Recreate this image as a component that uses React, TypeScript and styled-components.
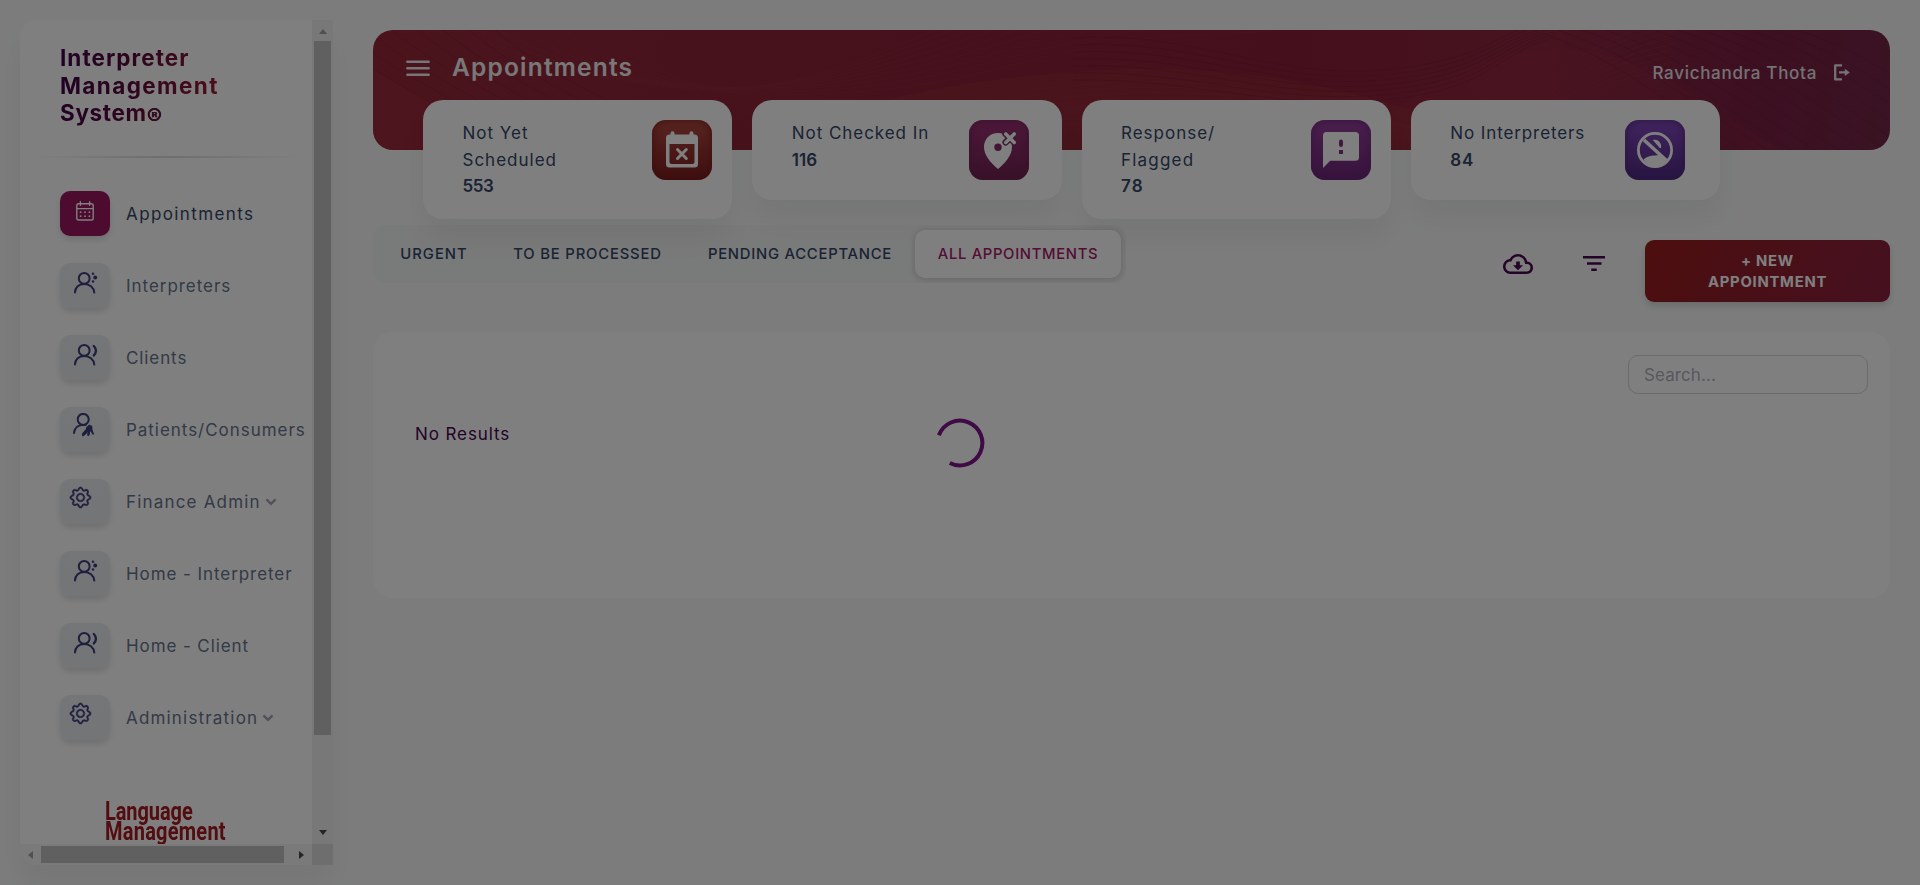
import React from "react";
import styled, { createGlobalStyle } from "styled-components";
import { BsGear } from "react-icons/bs";
import { MdOutlineCloudDownload } from "react-icons/md";

const GlobalStyle = createGlobalStyle`
  *, *::before, *::after { box-sizing: border-box; }
  body {
    margin: 0;
    background: #f8f9fa;
    color: #344767;
    font-family: Inter, "Open Sans", sans-serif;
    font-size: 17px;
    overflow: hidden;
  }
  svg { display: block; }
`;

const Page = styled.div`
  display: flex;
  gap: 40px;
  height: 885px;
  padding: 20px 30px 20px 20px;
`;

/* Text with its own tracking */
const Track = styled.span<{ $ls: number }>`
  letter-spacing: ${(p) => p.$ls}px;
  white-space: nowrap;
`;

/* ---------- Sidebar ---------- */
const Sidebar = styled.aside`
  flex: none;
  display: grid;
  grid-template: 824px 21px / 292px 21px;
  width: 313px;
  height: 845px;
  border-radius: 16px 0 0 16px;
  box-shadow: 0 20px 27px rgba(0, 0, 0, 0.05);
  overflow: hidden;
`;

const SidebarBody = styled.div`
  display: flex;
  flex-direction: column;
  overflow: hidden;
  padding-top: 24px;
  background: #fff;
`;

const Brand = styled.h1`
  display: flex;
  flex-direction: column;
  align-self: flex-start;
  margin: 0 0 29px 40px;
  font-size: 22.5px;
  line-height: 27.5px;
  font-weight: 700;
  color: transparent;
  background: linear-gradient(100deg, #430448 5%, #5a0a3c 45%, #a01c34 100%);
  background-clip: text;
  -webkit-background-clip: text;
`;

const Registered = styled.span`
  font-size: 23px;
  line-height: 20px;
  vertical-align: -4px;
  color: #64123c;
`;

const Divider = styled.hr`
  flex: none;
  width: 100%;
  height: 2px;
  margin: 0 0 33px;
  border: 0;
  background: linear-gradient(90deg, #fff 3%, #dcdcdc 50%, #fff 97%);
`;

const BrandLine = styled(Track)`
  height: 27.5px;
`;

const Nav = styled.nav`
  display: flex;
  flex-direction: column;
  gap: 27px;
  padding-left: 40px;
`;

const NavItem = styled.a<{ $active?: boolean }>`
  display: flex;
  align-items: center;
  gap: 16px;
  height: 45px;
  color: ${(p) => (p.$active ? "#344767" : "#67748e")};
`;

const NavIcon = styled.span<{ $active?: boolean; $x: number; $y: number }>`
  flex: none;
  width: 50px;
  height: 45px;
  padding: ${(p) => p.$y}px 0 0 ${(p) => p.$x}px;
  border-radius: 10px;
  color: ${(p) => (p.$active ? "#fff" : "#3c3c7c")};
  background: ${(p) => (p.$active ? "#9a1760" : "linear-gradient(180deg, #e9ecf0, #e8eaec)")};
  box-shadow: 0 4px 6px rgba(0, 0, 0, 0.12);
`;

const NavLabel = styled.span`
  display: flex;
  align-items: center;
  gap: 4px;
  padding-top: 2px;
`;

const GearIcon = styled(BsGear)`
  width: 21px;
  height: 21px;
  stroke: currentColor;
  stroke-width: 0.45px;
  overflow: visible;
`;

const Logo = styled.div`
  display: flex;
  flex-direction: column;
  align-items: flex-start;
  margin: 62px 0 0 85px;
  color: #a51a22;
  font: 700 25px/20.5px Roboto, sans-serif;
  transform: scaleX(0.8);
  transform-origin: left top;
`;

const VerticalBar = styled.div`
  display: flex;
  flex-direction: column;
  align-items: center;
  background: #f1f1f1;
  &::before {
    content: "";
    margin: 9px 0 7px;
    border: solid transparent;
    border-width: 0 4.5px 5px;
    border-bottom-color: #a0a0a0;
  }
  &::after {
    content: "";
    margin: auto 0 9px;
    border: solid transparent;
    border-width: 5px 4.5px 0;
    border-top-color: #484848;
  }
`;

const VerticalThumb = styled.div`
  width: 17px;
  height: 694px;
  background: #c1c1c1;
`;

const HorizontalBar = styled.div`
  display: flex;
  align-items: center;
  background: #f4f4f4;
  &::before {
    content: "";
    margin: 0 8px;
    border: solid transparent;
    border-width: 4.5px 5px 4.5px 0;
    border-right-color: #a0a0a0;
  }
  &::after {
    content: "";
    margin: 0 8px 0 auto;
    border: solid transparent;
    border-width: 4.5px 0 4.5px 5px;
    border-left-color: #484848;
  }
`;

const HorizontalThumb = styled.div`
  width: 243px;
  height: 17px;
  background: #c1c1c1;
`;

const ScrollCorner = styled.div`
  background: #dcdcdc;
`;

/* ---------- Main column ---------- */
const Main = styled.main`
  flex: 1;
  min-width: 0;
  display: flex;
  flex-direction: column;
  padding-top: 10px;
`;

const Header = styled.header`
  flex: none;
  position: relative;
  height: 120px;
  border-radius: 20px;
  overflow: hidden;
  background: linear-gradient(100deg, #97293b 0%, #8f2539 20%, #8b2038 60%, #8e273f 76%, #7a1f42 90%, #742748 100%);
`;

const Waves = styled.svg`
  position: absolute;
  inset: 0;
`;

const HeaderContent = styled.div`
  position: relative;
  display: flex;
  align-items: center;
  height: 76px;
  padding: 0 40px 0 33px;
  color: #fff;
`;

const PageTitle = styled.h2`
  margin: 0 0 2px 22px;
  font-size: 24.5px;
  font-weight: 600;
  line-height: 30px;
  color: #f0f0f2;
`;

const User = styled.div`
  display: flex;
  align-items: center;
  gap: 16px;
  margin: 9px 0 0 auto;
  font-size: 17px;
  font-weight: 500;
  color: #e9e4e8;
`;

const Stats = styled.section`
  flex: none;
  position: relative;
  display: grid;
  grid-template-columns: repeat(4, 309.25px);
  align-items: start;
  gap: 20px;
  height: 119px;
  margin: -50px 0 6px 50px;
`;

const StatCard = styled.article<{ $right: number }>`
  display: flex;
  justify-content: space-between;
  padding: 20px ${(p) => p.$right}px 19.5px 39.5px;
  border-radius: 20px;
  background: #fff;
  box-shadow: 0 20px 27px rgba(0, 0, 0, 0.05);
`;

const StatText = styled.div`
  display: flex;
  flex-direction: column;
  line-height: 26.5px;
`;

const StatValue = styled(Track)`
  font-weight: 600;
`;

const StatIcon = styled.div<{ $from: string; $to: string }>`
  display: grid;
  place-items: center;
  width: 60px;
  height: 60px;
  border-radius: 14px;
  background: ${(p) => `linear-gradient(180deg, ${p.$from}, ${p.$to})`};
  box-shadow: inset 0 0 8px ${(p) => p.$to};
`;

const Toolbar = styled.div`
  flex: none;
  display: flex;
  justify-content: space-between;
  align-items: flex-start;
  height: 107px;
`;

const Tabs = styled.div`
  position: relative;
  display: flex;
  height: 58px;
  padding: 5px;
  border-radius: 12px;
  background: rgba(0, 0, 0, 0.018);
  overflow: hidden;
`;

const Tab = styled.button<{ $active?: boolean; $width: number }>`
  width: ${(p) => p.$width}px;
  height: 48px;
  padding: 0;
  border: 0;
  border-radius: 10px;
  font: 500 14.8px Inter, sans-serif;
  color: ${(p) => (p.$active ? "#a8186a" : "#344767")};
  background: ${(p) => (p.$active ? "#fff" : "transparent")};
  box-shadow: ${(p) => (p.$active ? "0 1px 6px 1px rgba(0, 0, 0, 0.14)" : "none")};
`;

const Actions = styled.div`
  display: flex;
  align-items: flex-start;
  padding-top: 15px;
  color: #480650;
`;

const DownloadButton = styled.span`
  margin: 8.5px 50px 0 0;
`;

const FilterButton = styled.span`
  margin: 16px 40px 0 0;
`;

const NewButton = styled.button`
  display: flex;
  flex-direction: column;
  align-items: center;
  justify-content: center;
  width: 245px;
  height: 62px;
  border: 0;
  border-radius: 9px;
  padding: 1px 0 0;
  color: #fff;
  font: 700 14.8px/21px Inter, sans-serif;
  background: linear-gradient(120deg, #9b1c1c, #931f2c 40%, #8b2040);
  box-shadow: 0 4px 7px rgba(0, 0, 0, 0.14);
`;

const Panel = styled.section`
  flex: none;
  display: flex;
  flex-direction: column;
  height: 266px;
  padding: 23px 22px;
  border-radius: 20px;
  background: #fff;
`;

const Search = styled.div`
  align-self: flex-end;
  width: 240px;
  height: 39px;
  padding: 1px 15px 0;
  border: 1px solid #d2d6da;
  border-radius: 10px;
  line-height: 37px;
  color: #adb2bd;
`;

const Empty = styled.p`
  margin: 30px 0 0 20px;
  line-height: 20px;
  color: #480650;
`;

/* ---------- Loading layer ---------- */
const Backdrop = styled.div`
  position: fixed;
  inset: 0;
  background: rgba(0, 0, 0, 0.5);
`;

const Spinner = styled.svg`
  position: absolute;
  left: calc(50% - 25px);
  top: calc(50% - 24.5px);
`;

/* ---------- Icons ---------- */
const CalendarIcon = () => (
  <svg width="18" height="20" viewBox="0 0 18 20" fill="none" stroke="currentColor" strokeWidth="1.4" strokeLinecap="round">
    <rect x="0.8" y="2.7" width="16.4" height="16.3" rx="1.8" />
    <path d="M1 7.6h16M4.4.8v3.4M13.6.8v3.4" />
    <path strokeWidth="1.8" strokeDasharray="0 4.4" d="M4.6 11.2h9M4.6 15.2h9" />
  </svg>
);

const PersonBase = () => (
  <>
    <circle cx="10.2" cy="6.4" r="5.4" />
    <path d="M1 20.6C1 15.4 5 11.9 10.2 11.9S19.8 15.4 20.3 20.6" />
  </>
);

const InterpreterIcon = () => (
  <svg width="25" height="22" viewBox="0 0 25 22" fill="none" stroke="currentColor" strokeWidth="2" strokeLinecap="round">
    <PersonBase />
    <g fill="currentColor" stroke="none">
      <circle cx="19" cy="1.8" r="1.2" />
      <circle cx="21.2" cy="5.6" r="2" />
      <circle cx="19" cy="9.5" r="1.2" />
    </g>
  </svg>
);

const ClientIcon = () => (
  <svg width="25" height="22" viewBox="0 0 25 22" fill="none" stroke="currentColor" strokeWidth="2" strokeLinecap="round">
    <PersonBase />
    <path strokeWidth="2.4" d="M19.8 2c2.8 2.8 2.8 6.8 0 9.4" />
  </svg>
);

const PatientIcon = () => (
  <svg width="25" height="24" viewBox="0 0 25 24" fill="none" stroke="currentColor" strokeWidth="2" strokeLinecap="round">
    <circle cx="10.2" cy="6.4" r="5.5" />
    <path d="M1 20c.5-4.5 3.6-7.7 7.4-8.1h4.2M10 22.2c2.6-1.6 4.5-4 6.4-8.6l3.6 7" />
    <path strokeWidth="2.6" d="M16.6 13.8 10.2 21M16.6 13.6l-1.2 8" />
    <path fill="currentColor" d="M14 15l2-2 2.2.6.4 4-3.6-.6z" />
  </svg>
);

const Chevron = () => (
  <svg width="12" height="8" viewBox="0 0 12 8" fill="none" stroke="#a8a0b4" strokeWidth="2.4">
    <path d="M1.4 1.4 6 5.8l4.6-4.4" />
  </svg>
);

const MenuIcon = () => (
  <svg width="24" height="17" viewBox="0 0 24 17" stroke="#eceaee" strokeWidth="2.6" strokeLinecap="round">
    <path d="M1.4 1.7h21.2M1.4 8.2h21.2M1.4 14.7h21.2" />
  </svg>
);

const LogoutIcon = () => (
  <svg width="17" height="17" viewBox="0 0 17 17" fill="none" stroke="currentColor" strokeWidth="2.3" strokeLinejoin="round">
    <path d="M9 1.4H2.2v14H9M6 8.4h7" />
    <path fill="currentColor" stroke="none" d="M11.8 4.8 16.8 8.4 11.8 12z" />
  </svg>
);

const NotScheduledIcon = () => (
  <svg width="34" height="38" viewBox="0 0 34 38">
    <path
      fill="#fff"
      fillRule="evenodd"
      d="M5.500 3.500V2.200a2 2 0 0 1 4 0v1.300h15V2.200a2 2 0 0 1 4 0v1.300h1A3.500 3.500 0 0 1 33 7v26a3.500 3.500 0 0 1-3.500 3.500h-25A3.500 3.500 0 0 1 1 33V7a3.500 3.500 0 0 1 3.500-3.500zM4.500 13v18a2 2 0 0 0 2 2h21a2 2 0 0 0 2-2V13z"
    />
    <path d="m12.5 18.5 8.8 9M21.3 18.5l-8.8 9" stroke="#fff" strokeWidth="3" strokeLinecap="round" />
  </svg>
);

const NotCheckedInIcon = () => (
  <svg width="34" height="38" viewBox="0 0 34 38">
    <path fill="#fff" fillRule="evenodd" d="M16 2C8 2 2 8 2 16c0 8.500 7 16 14 22 7-6 14-13.500 14-22C30 8 24 2 16 2zm0 10.600a3.700 3.700 0 1 0 0 7.400 3.700 3.700 0 0 0 0-7.400z" />
    <path d="m23.6 3 8.8 8.4M32.4 3l-8.8 8.4" stroke="#822a66" strokeWidth="6.4" strokeLinecap="round" />
    <path d="m23.8 3 8.4 8.4M32.2 3l-8.4 8.4" stroke="#fff" strokeWidth="3.6" strokeLinecap="round" />
  </svg>
);

const FlaggedIcon = () => (
  <svg width="36" height="36" viewBox="0 0 36 36">
    <path fill="#fff" d="M3.6 0h28.8A3.6 3.6 0 0 1 36 3.6v21.6a3.6 3.6 0 0 1-3.6 3.6H7.2L0 36V3.6A3.6 3.6 0 0 1 3.6 0z" />
    <path fill="#82307e" d="M18 7.4a2 2 0 0 1 2 2V13a2 2 0 0 1-4 0V9.4a2 2 0 0 1 2-2zM16 18h4v4h-4z" />
  </svg>
);

const NoInterpretersIcon = () => (
  <svg width="36" height="36" viewBox="0 0 36 36" fill="none">
    <circle cx="18" cy="18" r="16.6" stroke="#fff" strokeWidth="2.8" />
    <path fill="#fff" d="M6.5 27.5C10 24.5 13 23.5 17.5 23.5l4.5-.5 8.5 4.5C27.5 32 23 34 18 34S9 31.800 6.500 27.500zM15.800 8c4-1 8.600 1.600 8.400 7.200-.2 1.400-1 1.400-1.600.6z" />
    <path d="M7 8 29.5 28.5" stroke="#fff" strokeWidth="3.6" />
  </svg>
);

const FilterIcon = () => (
  <svg width="22" height="15" viewBox="0 0 22 15" fill="currentColor">
    <path d="M0 0h22v2.500H0zM4 6.200h14.500v2.500H4zM8.300 12.400h5.400v2.500H8.300z" />
  </svg>
);

const range = (n: number) => Array.from({ length: n }, (_, i) => i);

const HeaderWaves = () => (
  <Waves width="1517" height="120" viewBox="0 0 1517 120" fill="none">
    <path fill="#a33a35" opacity="0.25" d="M400 110C520 60 600 50 700 42S900 40 1010 72 1110 100 1130 120H390z" />
    <path fill="#a8323c" opacity="0.22" d="M0 40C60 70 100 100 160 120H0z" />
    <path fill="#a83440" opacity="0.14" d="M1010 90C1080 30 1160 8 1230 24s110 60 180 96H1000z" />
    <g stroke="#b04050" opacity="0.18">
      {range(9).map((i) => (
        <path key={i} d={`M${60 + i * 22} 0C${220 + i * 14} ${60 + i * 5} 430 ${88 - i * 4} 620 ${40 - i * 8}S820 ${10 - i * 6} 900 -${i * 4}`} />
      ))}
      {range(9).map((i) => (
        <path key={i} d={`M${440 + i * 14} 120C${600 + i * 8} ${50 + i * 6} ${820} ${26 + i * 7} ${1000 + i * 6} ${86 + i * 3}S1120 ${30 + i * 5} 1300 ${-10 + i * 6}`} />
      ))}
    </g>
    <g stroke="#5c1030" opacity="0.2">
      {range(8).map((i) => (
        <path key={i} d={`M${-60 + i * 26} 0C${10 + i * 24} 50 ${80 + i * 26} 80 ${130 + i * 28} 120`} />
      ))}
      {range(12).map((i) => (
        <path key={i} d={`M${1160 + i * 24} 0C${1240 + i * 24} 26 ${1290 + i * 24} 70 ${1370 + i * 24} 120`} />
      ))}
      {range(7).map((i) => (
        <path key={i} d={`M700 ${8 + i * 7}C820 ${i * 8} 900 ${50 + i * 5} 1010 ${40 + i * 5}S1120 ${i * 4} 1180 ${-10 + i * 3}`} />
      ))}
    </g>
  </Waves>
);

const navItems = [
  { label: "Appointments", ls: 1.4, icon: <CalendarIcon />, x: 16, y: 10, active: true },
  { label: "Interpreters", ls: 0.96, icon: <InterpreterIcon />, x: 14, y: 9 },
  { label: "Clients", ls: 0.9, icon: <ClientIcon />, x: 14, y: 9 },
  { label: "Patients/Consumers", ls: 0.96, icon: <PatientIcon />, x: 12.5, y: 6.5 },
  { label: "Finance Admin", ls: 1.18, icon: <GearIcon />, x: 9.5, y: 8.5, menu: true },
  { label: "Home - Interpreter", ls: 0.93, icon: <InterpreterIcon />, x: 14, y: 9 },
  { label: "Home - Client", ls: 0.9, icon: <ClientIcon />, x: 14, y: 9 },
  { label: "Administration", ls: 1.18, icon: <GearIcon />, x: 9.5, y: 8.5, menu: true },
];

const stats = [
  { lines: [["Not Yet", 1], ["Scheduled", 1]], value: "553", ls: -0.4, right: 20, from: "#b04a42", to: "#7c1c1e", icon: <NotScheduledIcon /> },
  { lines: [["Not Checked In", 0.95]], value: "116", ls: 0, right: 32.5, from: "#9c3076", to: "#702350", icon: <NotCheckedInIcon /> },
  { lines: [["Response/", 1], ["Flagged", 1.2]], value: "78", ls: 1.2, right: 20, from: "#963f9c", to: "#6c2678", icon: <FlaggedIcon /> },
  { lines: [["No Interpreters", 0.9]], value: "84", ls: 0.8, right: 35, from: "#8548be", to: "#4e2a82", icon: <NoInterpretersIcon /> },
] as const;

const tabs = [
  { label: "URGENT", ls: 1, width: 112 },
  { label: "TO BE PROCESSED", ls: 0.84, width: 195 },
  { label: "PENDING ACCEPTANCE", ls: 0.76, width: 230 },
  { label: "ALL APPOINTMENTS", ls: 0.67, width: 206, active: true },
];

export default function App() {
  return (
    <>
      <GlobalStyle />
      <Page>
        <Sidebar>
          <SidebarBody>
            <Brand>
              <BrandLine $ls={1.05}>Interpreter</BrandLine>
              <BrandLine $ls={1.4}>Management</BrandLine>
              <BrandLine $ls={0.65}>System<Registered>®</Registered></BrandLine>
            </Brand>
            <Divider />
            <Nav>
              {navItems.map((n) => (
                <NavItem key={n.label} $active={n.active}>
                  <NavIcon $active={n.active} $x={n.x} $y={n.y}>{n.icon}</NavIcon>
                  <NavLabel>
                    <Track $ls={n.ls}>{n.label}</Track>
                    {n.menu && <Chevron />}
                  </NavLabel>
                </NavItem>
              ))}
            </Nav>
            <Logo>
              <Track $ls={-0.1}>Language</Track>
              <Track $ls={0.3}>Management</Track>
            </Logo>
          </SidebarBody>
          <VerticalBar><VerticalThumb /></VerticalBar>
          <HorizontalBar><HorizontalThumb /></HorizontalBar>
          <ScrollCorner />
        </Sidebar>

        <Main>
          <Header>
            <HeaderWaves />
            <HeaderContent>
              <MenuIcon />
              <PageTitle><Track $ls={1.2}>Appointments</Track></PageTitle>
              <User>
                <Track $ls={0.7}>Ravichandra Thota</Track>
                <LogoutIcon />
              </User>
            </HeaderContent>
          </Header>

          <Stats>
            {stats.map((s) => (
              <StatCard key={s.value} $right={s.right}>
                <StatText>
                  {s.lines.map(([text, ls]) => <Track key={text} $ls={ls}>{text}</Track>)}
                  <StatValue $ls={s.ls}>{s.value}</StatValue>
                </StatText>
                <StatIcon $from={s.from} $to={s.to}>{s.icon}</StatIcon>
              </StatCard>
            ))}
          </Stats>

          <Toolbar>
            <Tabs>
              {tabs.map((t) => (
                <Tab key={t.label} $active={t.active} $width={t.width}>
                  <Track $ls={t.ls}>{t.label}</Track>
                </Tab>
              ))}
            </Tabs>
            <Actions>
              <DownloadButton><MdOutlineCloudDownload size={30} /></DownloadButton>
              <FilterButton><FilterIcon /></FilterButton>
              <NewButton>
                <Track $ls={0.75}>+ NEW</Track>
                <Track $ls={0.75}>APPOINTMENT</Track>
              </NewButton>
            </Actions>
          </Toolbar>

          <Panel>
            <Search><Track $ls={0.1}>Search...</Track></Search>
            <Empty><Track $ls={0.9}>No Results</Track></Empty>
          </Panel>
        </Main>
      </Page>
      <Backdrop>
        <Spinner width="50" height="50" viewBox="0 0 50 50" fill="none">
          <path d="M3.9 17.3A22.4 22.4 0 1 1 14.8 45" stroke="#3f0a45" strokeWidth="4" />
        </Spinner>
      </Backdrop>
    </>
  );
}
